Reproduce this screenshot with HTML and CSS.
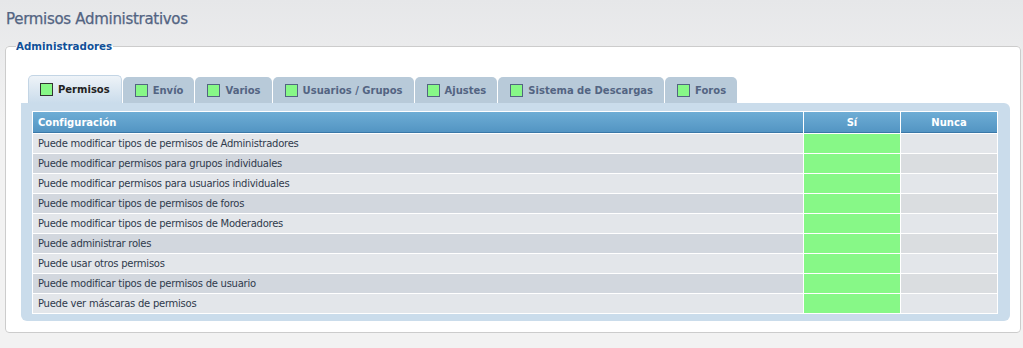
FILE: index.html
```html
<!DOCTYPE html>
<html lang="es">
<head>
  <meta charset="UTF-8"/>
  <title>Permisos Administrativos</title>
  <link rel="stylesheet" href="styles.css">
</head>
<body>
<h1 class="page-title">Permisos Administrativos</h1>

<fieldset class="perm-box">
  <legend>Administradores</legend>

  <ul class="tabs">
    <li class="tab active"><span class="flag"></span>Permisos</li>
    <li class="tab"><span class="flag"></span>Envío</li>
    <li class="tab"><span class="flag"></span>Varios</li>
    <li class="tab"><span class="flag"></span>Usuarios / Grupos</li>
    <li class="tab"><span class="flag"></span>Ajustes</li>
    <li class="tab"><span class="flag"></span>Sistema de Descargas</li>
    <li class="tab"><span class="flag"></span>Foros</li>
  </ul>

  <div class="panel">
    <table class="perm-table">
      <thead>
      <tr>
        <th class="col-name">Configuración</th>
        <th class="col-opt">Sí</th>
        <th class="col-opt">Nunca</th>
      </tr>
      </thead>
      <tbody>
      <tr><td>Puede modificar tipos de permisos de Administradores</td><td class="yes"></td><td class="never"></td></tr>
      <tr><td>Puede modificar permisos para grupos individuales</td><td class="yes"></td><td class="never"></td></tr>
      <tr><td>Puede modificar permisos para usuarios individuales</td><td class="yes"></td><td class="never"></td></tr>
      <tr><td>Puede modificar tipos de permisos de foros</td><td class="yes"></td><td class="never"></td></tr>
      <tr><td>Puede modificar tipos de permisos de Moderadores</td><td class="yes"></td><td class="never"></td></tr>
      <tr><td>Puede administrar roles</td><td class="yes"></td><td class="never"></td></tr>
      <tr><td>Puede usar otros permisos</td><td class="yes"></td><td class="never"></td></tr>
      <tr><td>Puede modificar tipos de permisos de usuario</td><td class="yes"></td><td class="never"></td></tr>
      <tr><td>Puede ver máscaras de permisos</td><td class="yes"></td><td class="never"></td></tr>
      </tbody>
    </table>
  </div>
</fieldset>
</body>
</html>
```

FILE: styles.css
```css
body {
  margin: 0;
  padding: 0;
  height: 348px;
  background: linear-gradient(#e6e7e9, #f2f2f2 120px);
  font-family: 'DejaVu Sans', Verdana, sans-serif;
  color: #2f3a4c;
}

.page-title {
  margin: 0;
  padding: 10px 6px 0 6px;
  font-size: 15px;
  font-weight: normal;
  letter-spacing: -0.3px;
  color: #536482;
  line-height: 18px;
  -webkit-text-stroke: 0.25px #536482;
}

.perm-box {
  margin: 12px 2px 0 5px;
  padding: 23px 10px 11px 15px;
  border: 1px solid #ccc;
  border-radius: 4px;
  background: #fff;
}

.perm-box legend {
  padding: 0 1px 0 0;
  margin-left: -5px;
  font-size: 10.3px;
  font-weight: bold;
  color: #115098;
}

.tabs {
  list-style: none;
  margin: 0;
  padding: 0 0 0 7px;
  display: flex;
  align-items: flex-end;
  gap: 1px;
}

.tab {
  display: flex;
  align-items: center;
  height: 26px;
  padding: 0 11px 0 12px;
  background: #b8cad9;
  border-radius: 5px 5px 0 0;
  font-size: 10px;
  font-weight: bold;
  color: #536482;
  box-sizing: border-box;
}

.tab.active {
  height: 28px;
  padding: 0 11px 1px 11px;
  background: linear-gradient(#eef3f8, #cadceb);
  border: 1px solid #c3d5e5;
  border-bottom: none;
  color: #222;
}

.flag {
  width: 11px;
  height: 11px;
  margin-right: 5px;
  background: #87f887;
  border: 1px solid #536482;
}

.tab.active .flag {
  border-color: #333;
}

.panel {
  background: #cadceb;
  border-radius: 0 6px 6px 6px;
  padding: 8px 12px 7px 11px;
}

.perm-table {
  width: 100%;
  background: #fff;
  border-spacing: 1px;
  font-size: 10px;
}

.perm-table th {
  height: 21px;
  padding: 0 5px;
  background: linear-gradient(#6eadd5, #5395c3);
  border-bottom: 1px solid #3a78a8;
  color: #fff;
  font-weight: bold;
  box-sizing: border-box;
}

.perm-table th.col-name {
  text-align: left;
}

.perm-table th.col-opt {
  width: 96px;
}

.perm-table td {
  height: 19px;
  padding: 0 5px;
  background: #e3e6ea;
  white-space: nowrap;
  letter-spacing: -0.25px;
}

.perm-table tbody tr:nth-child(even) td {
  background: #d2d7de;
}

.perm-table tbody tr:nth-child(even) td.never {
  background: #dadde0;
}

.perm-table td.yes,
.perm-table tbody tr:nth-child(even) td.yes {
  background: #87f887;
}
```
